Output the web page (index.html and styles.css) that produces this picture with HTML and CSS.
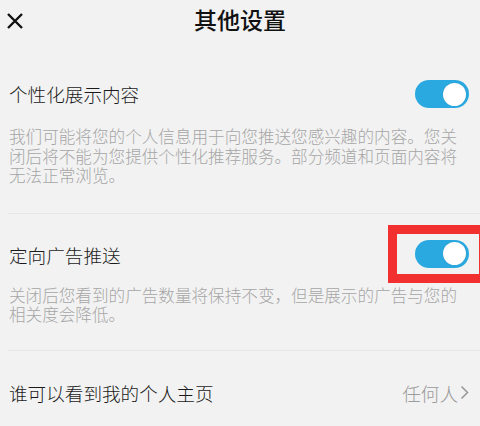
FILE: index.html
```html
<!DOCTYPE html>
<html lang="zh">
<head>
<meta charset="utf-8">
<link rel="stylesheet" href="styles.css">
</head>
<body>
<div class="page">
  <header class="topbar">
    <svg class="close" width="18" height="16" viewBox="0 0 18 16"><path d="M2 1 L16 15 M16 1 L2 15" stroke="#111" stroke-width="2.4" fill="none"/></svg>
    <h1 class="title">其他设置</h1>
  </header>

  <section class="group first">
    <div class="row">
      <span class="label">个性化展示内容</span>
      <span class="toggle"><span class="knob"></span></span>
    </div>
    <p class="desc">我们可能将您的个人信息用于向您推送您感兴趣的内容。您关闭后将不能为您提供个性化推荐服务。部分频道和页面内容将无法正常浏览。</p>
  </section>

  <section class="group second">
    <div class="row">
      <span class="label">定向广告推送</span>
      <span class="toggle-wrap">
        <span class="toggle"><span class="knob"></span></span>
        <span class="highlight"></span>
      </span>
    </div>
    <p class="desc">关闭后您看到的广告数量将保持不变，但是展示的广告与您的相关度会降低。</p>
  </section>

  <section class="group third">
    <div class="row">
      <span class="label">谁可以看到我的个人主页</span>
      <span class="value">任何人<svg class="chev" width="9" height="15" viewBox="0 0 9 15"><path d="M1.5 1.5 L7.5 7.5 L1.5 13.5" stroke="#9a9a9a" stroke-width="1.6" fill="none"/></svg></span>
    </div>
  </section>
</div>
</body>
</html>
```

FILE: styles.css
```css
html, body {
  margin: 0;
  padding: 0;
  background: #f2f2f2;
}
body {
  font-family: "Noto Sans CJK SC", "Noto Sans", sans-serif;
  width: 480px;
  height: 426px;
  overflow: hidden;
}
.page {
  width: 480px;
}
.topbar {
  position: relative;
  height: 40px;
  display: flex;
  align-items: center;
  justify-content: center;
}
.close {
  position: absolute;
  left: 6px;
  top: 13px;
}
.title {
  margin: 0;
  font-size: 23px;
  font-weight: 500;
  color: #111;
  line-height: 40px;
  margin-top: -2px;
}
.group {
  padding-left: 9px;
  padding-right: 11px;
}
.group.first {
  padding-top: 40px;
  padding-bottom: 27px;
  border-bottom: 1px solid #e6e6e6;
  margin-left: 8px;
  padding-left: 1px;
}
.group.second {
  padding-top: 26px;
  padding-bottom: 25px;
  border-bottom: 1px solid #e6e6e6;
  margin-left: 8px;
  padding-left: 1px;
}
.group.third {
  padding-top: 28px;
}
.row {
  display: flex;
  align-items: center;
  justify-content: space-between;
  height: 28px;
}
.label {
  font-size: 18.6px;
  font-weight: 300;
  color: #1a1a1a;
  line-height: 28px;
}
.second .label {
  margin-top: 3px;
}
.toggle-wrap {
  position: relative;
  display: flex;
}
.toggle {
  display: block;
  width: 54px;
  height: 28px;
  border-radius: 14px;
  background: #2aa9e0;
  position: relative;
}
.knob {
  position: absolute;
  right: 3px;
  top: 2.5px;
  width: 23px;
  height: 23px;
  border-radius: 50%;
  background: #fff;
  box-shadow: 0 0 1px rgba(0,0,0,0.2);
}
.highlight {
  position: absolute;
  left: -27px;
  top: -15px;
  width: 82px;
  height: 40px;
  border: 9px solid #f2302f;
}
.desc {
  margin: 19px 0 0;
  font-size: 16.6px;
  font-weight: 300;
  line-height: 19.5px;
  color: #a6a6a6;
  padding-right: 10px;
}
.second .desc {
  margin-top: 18px;
}
.value {
  display: flex;
  align-items: center;
  font-size: 18.6px;
  font-weight: 300;
  color: #9a9a9a;
  gap: 2px;
}
```
